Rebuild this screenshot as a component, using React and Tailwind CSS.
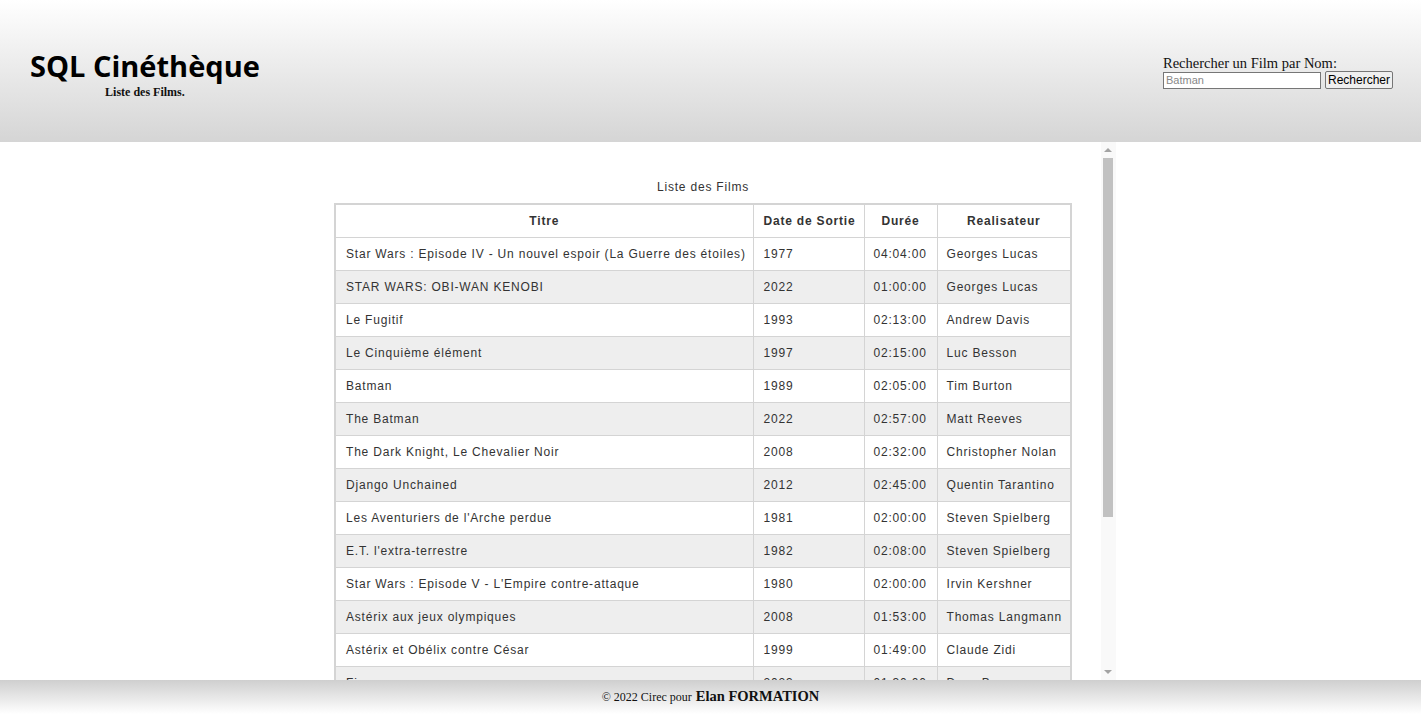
import React from "react";

const films = [
  ["Star Wars : Episode IV - Un nouvel espoir (La Guerre des étoiles)", "1977", "04:04:00", "Georges Lucas"],
  ["STAR WARS: OBI-WAN KENOBI", "2022", "01:00:00", "Georges Lucas"],
  ["Le Fugitif", "1993", "02:13:00", "Andrew Davis"],
  ["Le Cinquième élément", "1997", "02:15:00", "Luc Besson"],
  ["Batman", "1989", "02:05:00", "Tim Burton"],
  ["The Batman", "2022", "02:57:00", "Matt Reeves"],
  ["The Dark Knight, Le Chevalier Noir", "2008", "02:32:00", "Christopher Nolan"],
  ["Django Unchained", "2012", "02:45:00", "Quentin Tarantino"],
  ["Les Aventuriers de l'Arche perdue", "1981", "02:00:00", "Steven Spielberg"],
  ["E.T. l'extra-terrestre", "1982", "02:08:00", "Steven Spielberg"],
  ["Star Wars : Episode V - L'Empire contre-attaque", "1980", "02:00:00", "Irvin Kershner"],
  ["Astérix aux jeux olympiques", "2008", "01:53:00", "Thomas Langmann"],
  ["Astérix et Obélix contre César", "1999", "01:49:00", "Claude Zidi"],
  ["Fiasco", "2023", "01:30:00", "Dany Boon"],
  ["Jurassic Park", "1993", "02:07:00", "Steven Spielberg"],
  ["Pulp Fiction", "1994", "02:34:00", "Quentin Tarantino"],
  ["Inception", "2010", "02:28:00", "Christopher Nolan"],
  ["Léon", "1994", "01:50:00", "Luc Besson"],
  ["Edward aux mains d'argent", "1990", "01:45:00", "Tim Burton"],
];

export default function App() {
  return (
    <div className="h-screen flex flex-col bg-white overflow-hidden">
      {/* header */}
      <header className="h-[142px] shrink-0 bg-gradient-to-b from-white to-[#d5d5d5] flex justify-between items-start pt-[46px] pl-[30px] pr-[28px]">
        <div className="text-center">
          <h1 className="text-[29px] leading-[40px] font-bold text-black" style={{ fontFamily: '"Comic Sans MS", "Open Sans", sans-serif' }}>
            SQL Cinéthèque
          </h1>
          <p className="text-[12px] leading-[12px] font-bold text-[#111]" style={{ fontFamily: '"Liberation Serif", serif' }}>
            Liste des Films.
          </p>
        </div>
        <form className="pt-[10px] text-[#111]" style={{ fontFamily: '"Liberation Serif", serif' }} onSubmit={(e) => e.preventDefault()}>
          <label className="block text-[14.5px] leading-[14px]">Rechercher un Film par Nom:</label>
          <div className="flex items-center gap-[4px] mt-[1px]">
            <input
              type="text"
              placeholder="Batman"
              className="w-[158px] h-[17px] border border-[#767676] bg-white px-[2px] text-[11px] placeholder:text-[#888]"
              style={{ fontFamily: '"Liberation Sans", Arial, sans-serif' }}
            />
            <button
              className="h-[18px] px-[2px] border border-[#767676] rounded-[2px] bg-[#efefef] text-[12px] leading-[14px] text-black"
              style={{ fontFamily: '"Liberation Sans", Arial, sans-serif' }}
            >
              Rechercher
            </button>
          </div>
        </form>
      </header>

      {/* scrolling list */}
      <main className="h-[538px] shrink-0 w-[810px] mx-auto flex">
        <div className="flex-1 overflow-hidden pt-[37px] text-[#333] tracking-wider" style={{ fontFamily: '"Liberation Sans", Arial, sans-serif' }}>
          <div className="text-center text-[12px] leading-[16px] mb-[8px]">Liste des Films</div>
          <table className="mx-auto w-[736px] table-fixed border-collapse border-2 border-[#d4d4d4] text-[12px] whitespace-nowrap">
            <thead>
              <tr className="bg-white">
                <th className="w-[418px] h-[33px] px-[10px] border border-[#d4d4d4] font-bold text-center">Titre</th>
                <th className="w-[111px] h-[33px] px-[10px] border border-[#d4d4d4] font-bold text-center">Date de Sortie</th>
                <th className="w-[73px] h-[33px] px-[9px] border border-[#d4d4d4] font-bold text-center">Durée</th>
                <th className="w-[134px] h-[33px] px-[9px] border border-[#d4d4d4] font-bold text-center">Realisateur</th>
              </tr>
            </thead>
            <tbody>
              {films.map((f, i) => (
                <tr key={i} className={i % 2 === 1 ? "bg-[#eeeeee]" : "bg-white"}>
                  <td className="h-[33px] px-[10px] border border-[#d4d4d4]">{f[0]}</td>
                  <td className="h-[33px] px-[10px] border border-[#d4d4d4]">{f[1]}</td>
                  <td className="h-[33px] px-[9px] border border-[#d4d4d4]">{f[2]}</td>
                  <td className="h-[33px] px-[9px] border border-[#d4d4d4]">{f[3]}</td>
                </tr>
              ))}
            </tbody>
          </table>
        </div>

        {/* scrollbar */}
        <div className="w-[15px] shrink-0 bg-[#f9f9f9] flex flex-col items-center">
          <div className="h-[16px] flex items-center justify-center">
            <div className="w-0 h-0 border-l-[4px] border-r-[4px] border-b-[4px] border-l-transparent border-r-transparent border-b-[#a3a3a3]" />
          </div>
          <div className="w-[10px] h-[359px] bg-[#c1c1c1]" />
          <div className="flex-1" />
          <div className="h-[16px] flex items-center justify-center">
            <div className="w-0 h-0 border-l-[4px] border-r-[4px] border-t-[4px] border-l-transparent border-r-transparent border-t-[#a3a3a3]" />
          </div>
        </div>
      </main>

      {/* footer */}
      <footer className="flex-1 bg-gradient-to-b from-[#cfcfcf] to-white flex items-center justify-center text-[#111]" style={{ fontFamily: '"Liberation Serif", serif' }}>
        <span className="text-[12px]">© 2022 Cirec pour </span>
        <span className="text-[14.5px] font-bold ml-[4px]">Elan FORMATION</span>
      </footer>
    </div>
  );
}
